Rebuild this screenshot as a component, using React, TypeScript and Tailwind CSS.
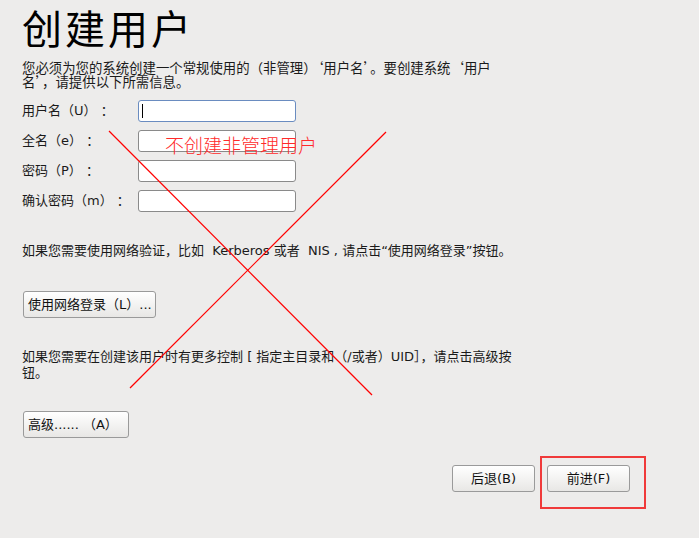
import React from 'react';

const font = { fontFamily: '"DejaVu Sans", "Noto Sans CJK SC", sans-serif' };

function Field({ label, focused }: { label: string; focused?: boolean }) {
  return (
    <div className="flex items-center h-[22px]">
      <div className="w-[116px] text-[13px] text-[#1a1a1a] whitespace-pre">{label}</div>
      <div
        className={
          'w-[158px] h-[22px] bg-white rounded-[3px] border flex items-center px-[2px] ' +
          (focused ? 'border-[#6a8cc0]' : 'border-[#8a8a8a]')
        }
      >
        {focused && <div className="w-px h-[14px] bg-black ml-[1px]" />}
      </div>
    </div>
  );
}

function Btn({ children, className = '' }: { children: React.ReactNode; className?: string }) {
  return (
    <button
      className={
        'block h-[27px] rounded-[3px] border border-[#9a9a9a] bg-gradient-to-b from-white to-[#e8e7e5] text-[13px] text-[#111] whitespace-pre ' +
        className
      }
    >
      {children}
    </button>
  );
}

export default function App() {
  return (
    <div className="relative w-[699px] h-[538px] bg-[#edeceb] overflow-hidden" style={font}>
      <div className="pl-[22px] pt-[6px]">
        <h1 className="text-[40px] leading-[48px] text-black font-normal tracking-[3px]">创建用户</h1>
        <p
          className="mt-[6px] text-[13.4px] leading-[14px] text-[#1a1a1a] [font-feature-settings:'fwid']"
          style={{ fontFamily: '"Noto Sans CJK SC", sans-serif' }}
        >
          您必须为您的系统创建一个常规使用的（非管理）‘用户名’。要创建系统‘用户
          <br />
          名’，请提供以下所需信息。
        </p>
        <div className="mt-[12px] flex flex-col gap-[8px]">
          <Field label="用户名（U） ：" focused />
          <Field label="全名（e） ：" />
          <Field label="密码（P） ：" />
          <Field label="确认密码（m） ：" />
        </div>
        <p className="mt-[32px] text-[13px] leading-[13px] text-[#1a1a1a] whitespace-pre">
          如果您需要使用网络验证，比如  Kerberos 或者  NIS , 请点击“使用网络登录”按钮。
        </p>
        <Btn className="mt-[34px] ml-px w-[133px] text-left pl-[4px]">使用网络登录（L）...</Btn>
        <p className="mt-[31px] w-[500px] text-[13px] leading-[16px] text-[#1a1a1a]">
          如果您需要在创建该用户时有更多控制 [ 指定主目录和（/或者）UID］，请点击高级按
          <br />
          钮。
        </p>
        <Btn className="mt-[30px] ml-px w-[106px] text-left pl-[4px]">高级...... （A）</Btn>
        <div className="mt-[27px] flex justify-end pr-[69px] gap-[12px]">
          <Btn className="w-[83px]">后退(B)</Btn>
          <Btn className="w-[83px]">前进(F)</Btn>
        </div>
      </div>

      <svg className="absolute inset-0 pointer-events-none" width="699" height="538" viewBox="0 0 699 538">
        <path d="M109 131 L372 395" stroke="#ff0000" strokeWidth="1.2" fill="none" />
        <path d="M130 388 L386 132" stroke="#ff0000" strokeWidth="1.2" fill="none" />
      </svg>
      <div
        className="absolute left-[165px] top-[133px] text-[19px] leading-[24px] text-[#ff2a2a]"
        style={{ fontFamily: '"Noto Sans CJK SC", sans-serif', fontWeight: 300 }}
      >
        不创建非管理用户
      </div>
      <div className="absolute left-[540px] top-[456px] w-[106px] h-[53px] border-[2px] border-[#f03a3a]" />
    </div>
  );
}
